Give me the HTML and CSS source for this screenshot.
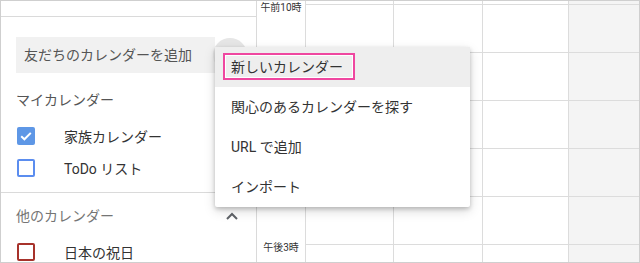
FILE: index.html
```html
<!DOCTYPE html>
<html>
<head>
  <meta charset="UTF-8">
  <title>カレンダー</title>
  <link rel="stylesheet" href="styles.css">
</head>
<body>
<div class="frame">
  <aside class="sidebar">
    <div class="sidebar-top"></div>

    <div class="add-row">
      <div class="add-input">友だちのカレンダーを追加</div>
      <span class="add-btn"></span>
    </div>

    <div class="section-title">マイカレンダー</div>
    <ul class="cal-list">
      <li><span class="check checked"><svg width="18" height="18" viewBox="0 0 18 18"><path d="M4.2 9.2l3.2 3.1 6.4-6.4" fill="none" stroke="#fff" stroke-width="2"/></svg></span>家族カレンダー</li>
      <li><span class="check blue"></span>ToDo リスト</li>
    </ul>

    <div class="divider"></div>

    <div class="section-title other">
      <span>他のカレンダー</span>
      <svg class="chevron" width="14" height="14" viewBox="0 0 14 14"><path d="M2 10l5-5 5 5" fill="none" stroke="#5f6368" stroke-width="2"/></svg>
    </div>
    <ul class="cal-list">
      <li><span class="check red"></span>日本の祝日</li>
    </ul>
  </aside>

  <!-- メニューに隠れる時刻は省略 -->
  <div class="times">
    <div class="hour">午前10時</div>
    <div class="hour"></div>
    <div class="hour"></div>
    <div class="hour"></div>
    <div class="hour"></div>
    <div class="hour">午後3時</div>
  </div>

  <div class="day d1">
    <div class="slot"></div><div class="slot"></div><div class="slot"></div>
    <div class="slot"></div><div class="slot"></div><div class="slot"></div>
  </div>
  <div class="day d2">
    <div class="slot"></div><div class="slot"></div><div class="slot"></div>
    <div class="slot"></div><div class="slot"></div><div class="slot"></div>
  </div>
  <div class="day d3">
    <div class="slot"></div><div class="slot"></div><div class="slot"></div>
    <div class="slot"></div><div class="slot"></div><div class="slot"></div>
  </div>
  <div class="day d4 weekend">
    <div class="slot"></div><div class="slot"></div><div class="slot"></div>
    <div class="slot"></div><div class="slot"></div><div class="slot"></div>
  </div>

  <!-- 追加メニュー -->
  <ul class="menu">
    <li class="active"><span class="mark"></span>新しいカレンダー</li>
    <li>関心のあるカレンダーを探す</li>
    <li>URL で追加</li>
    <li>インポート</li>
  </ul>
</div>
</body>
</html>
```

FILE: styles.css
```css
body {
  margin: 0;
  padding: 0;
  background-color: #fff;
  font-family: Roboto, "Noto Sans CJK JP", sans-serif;
}

.frame {
  position: relative;
  display: flex;
  width: 640px;
  height: 263px;
  box-sizing: border-box;
  border: 1px solid #cfcfcf;
  overflow: hidden;
}

/* サイドバー */
.sidebar {
  flex: none;
  width: 240px;
  padding-left: 15px;
  border-right: 1px solid #dadada;
}

.sidebar-top {
  height: 15px;
  margin-left: -15px;
  border-bottom: 1px solid #dadada;
}

.add-row {
  display: flex;
  align-items: center;
  margin-top: 20px;
}

.add-input {
  width: 183px;
  height: 36px;
  line-height: 36px;
  padding-left: 8px;
  padding-right: 8px;
  background-color: #f1f1f1;
  color: #555;
  font-size: 14px;
  white-space: nowrap;
}

.add-btn {
  flex: none;
  width: 34px;
  height: 34px;
  margin-left: -2px;
  border-radius: 50%;
  background-color: #e6e6e6;
}

.section-title {
  height: 20px;
  line-height: 20px;
  margin-top: 17px;
  color: #555;
  font-size: 14px;
}

.section-title.other {
  display: flex;
  align-items: center;
  justify-content: space-between;
  margin-top: 13px;
  padding-right: 17px;
  color: #757575;
}

.chevron {
  display: block;
}

.cal-list {
  margin: 10px 0 0 0;
  padding: 0;
  list-style-type: none;
}

.cal-list li {
  display: flex;
  align-items: center;
  height: 32px;
  color: #333;
  font-size: 14px;
}

.check {
  flex: none;
  width: 18px;
  height: 18px;
  box-sizing: border-box;
  margin-left: 1px;
  margin-right: 29px;
  border-radius: 2px;
  border: 2px solid #5b8def;
}

.check.checked {
  border: none;
  background-color: #5e97e6;
}

.check.checked svg {
  display: block;
}

.check.red {
  border-color: #a7322b;
}

.divider {
  height: 1px;
  margin-top: 8px;
  margin-left: -15px;
  background-color: #dadada;
}

/* 時間軸 */
.times {
  flex: none;
  width: 48px;
  border-right: 1px solid #dcdcdc;
}

.hour {
  height: 48px;
  padding-top: 1px;
  box-sizing: border-box;
  text-align: center;
  color: #333;
  font-size: 10px;
  line-height: 12px;
}

.day {
  flex: none;
  padding-top: 3px;
  border-right: 1px solid #dcdcdc;
}

.d1 { width: 87px; }
.d2 { width: 88px; }
.d3 { width: 85px; }
.d4 { width: 70px; border-right: none; }

.weekend {
  background-color: #f4f4f4;
}

.slot {
  height: 47px;
  border-top: 1px solid #dcdcdc;
}

/* メニュー */
.menu {
  position: absolute;
  left: 214px;
  top: 46px;
  width: 255px;
  margin: 0;
  padding: 0;
  list-style-type: none;
  background-color: #fff;
  border-radius: 2px;
  box-shadow: 0 2px 4px rgba(0, 0, 0, 0.2), 0 4px 12px rgba(0, 0, 0, 0.15);
}

.menu li {
  position: relative;
  height: 40px;
  line-height: 40px;
  padding-left: 16px;
  color: #333;
  font-size: 14px;
}

.menu li.active {
  background-color: #eee;
}

.mark {
  position: absolute;
  left: 8px;
  top: 6px;
  width: 128px;
  height: 23px;
  border: 2px solid #ef47a0;
  box-shadow: inset 0 0 0 1px #fff;
}
```
